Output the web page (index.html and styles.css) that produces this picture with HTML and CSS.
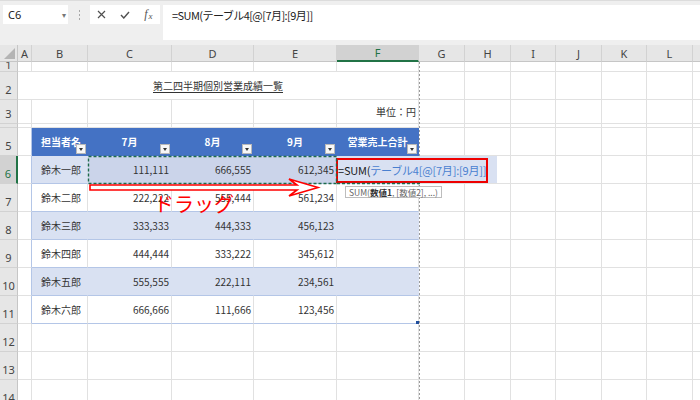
FILE: index.html
```html
<!DOCTYPE html>
<html lang="ja">
<head>
<meta charset="utf-8">
<title>Excel</title>
<link rel="stylesheet" href="styles.css">
</head>
<body>
<div class="app">
  <div class="topbar">
    <div class="namebox"><span>C6</span><span class="nb-arrow">▾</span></div>
    <div class="grip"><i></i><i></i><i></i></div>
    <div class="fxbox">
      <span class="fxbtn"><svg width="9" height="9" viewBox="0 0 9 9"><path d="M1 1L8 8M8 1L1 8" stroke="#505050" stroke-width="1.2" fill="none"/></svg></span>
      <span class="fxbtn"><svg width="10" height="8" viewBox="0 0 10 8"><path d="M1 4L3.8 7L9 1" stroke="#505050" stroke-width="1.4" fill="none"/></svg></span>
      <span class="fxbtn fx"><i>f</i><i class="fx-x">x</i></span>
    </div>
    <div class="formula">=SUM(テーブル4[@[7月]:[9月]]</div>
  </div>

  <div class="sheet">
    <!-- column headers -->
    <div class="corner"><i class="tri"></i></div>
    <div class="ch">A</div><div class="ch">B</div><div class="ch">C</div><div class="ch">D</div><div class="ch">E</div><div class="ch sel">F</div><div class="ch">G</div><div class="ch">H</div><div class="ch">I</div><div class="ch">J</div><div class="ch">K</div><div class="ch">L</div><div class="ch"></div>

    <!-- row 1 -->
    <div class="rh r1">1</div>
    <div class="c"></div><div class="c"></div><div class="c"></div><div class="c"></div><div class="c"></div><div class="c"></div><div class="c"></div><div class="c"></div><div class="c"></div><div class="c"></div><div class="c"></div><div class="c"></div><div class="c"></div>

    <!-- row 2 -->
    <div class="rh">2</div>
    <div class="c title"><span>第二四半期個別営業成績一覧</span></div>
    <div class="c"></div><div class="c"></div><div class="c"></div><div class="c"></div><div class="c"></div><div class="c"></div><div class="c"></div>

    <!-- row 3 -->
    <div class="rh">3</div>
    <div class="c"></div><div class="c"></div><div class="c"></div><div class="c"></div><div class="c"></div>
    <div class="c n">単位：円</div>
    <div class="c"></div><div class="c"></div><div class="c"></div><div class="c"></div><div class="c"></div><div class="c"></div><div class="c"></div>

    <!-- row 4 -->
    <div class="rh"></div>
    <div class="c"></div><div class="c"></div><div class="c"></div><div class="c"></div><div class="c"></div><div class="c"></div><div class="c"></div><div class="c"></div><div class="c"></div><div class="c"></div><div class="c"></div><div class="c"></div><div class="c"></div>

    <!-- row 5 : table header -->
    <div class="rh">5</div>
    <div class="c ta"></div>
    <div class="th l">担当者名<span class="fb"><i></i></span></div>
    <div class="th">7月<span class="fb"><i></i></span></div>
    <div class="th">8月<span class="fb"><i></i></span></div>
    <div class="th">9月<span class="fb"><i></i></span></div>
    <div class="th">営業売上合計<span class="fb"><i></i></span></div>
    <div class="c"></div><div class="c"></div><div class="c"></div><div class="c"></div><div class="c"></div><div class="c"></div><div class="c"></div>

    <!-- row 6 -->
    <div class="rh sel">6</div>
    <div class="c ta"></div>
    <div class="bd nm">鈴木一郎</div>
    <div class="bd n sel">111,111</div>
    <div class="bd n sel">666,555</div>
    <div class="bd n sel">612,345</div>
    <div class="bd edit-cell">
      <div class="edit"><span class="k">=SUM(</span><span class="ref">テーブル4[@[7月]:[9月]]</span><span class="redbox"></span></div>
    </div>
    <div class="c"></div><div class="c"></div><div class="c"></div><div class="c"></div><div class="c"></div><div class="c"></div><div class="c"></div>

    <!-- row 7 -->
    <div class="rh">7</div>
    <div class="c ta"></div>
    <div class="wt nm">鈴木二郎</div>
    <div class="wt n">222,222</div>
    <div class="wt n">555,444</div>
    <div class="wt n">561,234</div>
    <div class="wt"></div>
    <div class="c"></div><div class="c"></div><div class="c"></div><div class="c"></div><div class="c"></div><div class="c"></div><div class="c"></div>

    <!-- row 8 -->
    <div class="rh">8</div>
    <div class="c ta"></div>
    <div class="bd nm">鈴木三郎</div>
    <div class="bd n">333,333</div>
    <div class="bd n">444,333</div>
    <div class="bd n">456,123</div>
    <div class="bd"></div>
    <div class="c"></div><div class="c"></div><div class="c"></div><div class="c"></div><div class="c"></div><div class="c"></div><div class="c"></div>

    <!-- row 9 -->
    <div class="rh">9</div>
    <div class="c ta"></div>
    <div class="wt nm">鈴木四郎</div>
    <div class="wt n">444,444</div>
    <div class="wt n">333,222</div>
    <div class="wt n">345,612</div>
    <div class="wt"></div>
    <div class="c"></div><div class="c"></div><div class="c"></div><div class="c"></div><div class="c"></div><div class="c"></div><div class="c"></div>

    <!-- row 10 -->
    <div class="rh">10</div>
    <div class="c ta"></div>
    <div class="bd nm">鈴木五郎</div>
    <div class="bd n">555,555</div>
    <div class="bd n">222,111</div>
    <div class="bd n">234,561</div>
    <div class="bd"></div>
    <div class="c"></div><div class="c"></div><div class="c"></div><div class="c"></div><div class="c"></div><div class="c"></div><div class="c"></div>

    <!-- row 11 -->
    <div class="rh">11</div>
    <div class="c ta"></div>
    <div class="wt nm">鈴木六郎</div>
    <div class="wt n">666,666</div>
    <div class="wt n">111,666</div>
    <div class="wt n">123,456</div>
    <div class="wt last"><span class="handle"></span></div>
    <div class="c"></div><div class="c"></div><div class="c"></div><div class="c"></div><div class="c"></div><div class="c"></div><div class="c"></div>

    <!-- row 12 -->
    <div class="rh">12</div>
    <div class="c"></div><div class="c"></div><div class="c"></div><div class="c"></div><div class="c"></div><div class="c"></div><div class="c"></div><div class="c"></div><div class="c"></div><div class="c"></div><div class="c"></div><div class="c"></div><div class="c"></div>

    <!-- row 13 -->
    <div class="rh">13</div>
    <div class="c"></div><div class="c"></div><div class="c"></div><div class="c"></div><div class="c"></div><div class="c"></div><div class="c"></div><div class="c"></div><div class="c"></div><div class="c"></div><div class="c"></div><div class="c"></div><div class="c"></div>

    <!-- row 14 -->
    <div class="rh">14</div>
    <div class="c"></div><div class="c"></div><div class="c"></div><div class="c"></div><div class="c"></div><div class="c"></div><div class="c"></div><div class="c"></div><div class="c"></div><div class="c"></div><div class="c"></div><div class="c"></div><div class="c"></div>
  </div>

  <!-- annotations over the sheet -->
  <svg class="annot" width="700" height="400" viewBox="0 0 700 400">
    <line x1="419.5" y1="62" x2="419.5" y2="157" stroke="#9a9a9a" stroke-width="1" stroke-dasharray="2 2"/>
    <line x1="419.5" y1="185" x2="419.5" y2="400" stroke="#9a9a9a" stroke-width="1" stroke-dasharray="2 2"/>
    <rect x="88.5" y="156.5" width="248" height="27" fill="none" stroke="#1e6b4a" stroke-width="1.4" stroke-dasharray="3 2"/>
    <line x1="337" y1="183.5" x2="420" y2="183.5" stroke="#1e6b4a" stroke-width="1.4" stroke-dasharray="3 2"/>
    <polygon points="90,185 297,185 289,179 318,187.5 289,196 297,190 90,190" fill="#fff" stroke="#f00" stroke-width="1.6"/>
  </svg>
  <div class="drag">ドラッグ</div>
  <div class="tip">SUM(<b>数値1</b>, [数値2], ...)</div>
</div>
</body>
</html>
```

FILE: styles.css
```css
* { box-sizing: border-box; }
html, body { margin: 0; padding: 0; }
body {
  width: 700px;
  height: 400px;
  overflow: hidden;
  background: #fff;
  font-family: "Noto Sans CJK JP", "Noto Sans", sans-serif;
}
.app {
  position: relative;
  width: 700px;
  height: 400px;
  overflow: hidden;
}

/* ---------- formula bar ---------- */
.topbar {
  height: 45px;
  background: #efefef;
  border-top: 1px solid #dcdcdc;
  display: flex;
  align-items: flex-start;
  padding: 4px 0 0 3px;
}
.namebox {
  width: 65px;
  height: 19px;
  background: #fff;
  display: flex;
  align-items: center;
  justify-content: space-between;
  padding: 0 2px 0 5px;
  font-family: "Noto Sans", sans-serif;
  font-size: 11px;
  color: #222;
}
.nb-arrow { font-size: 8px; color: #777; }
.grip {
  width: 22px;
  height: 19px;
  display: flex;
  flex-direction: column;
  align-items: center;
  justify-content: center;
  gap: 2px;
}
.grip i { display: block; width: 1px; height: 2px; background: #a8a8a8; }
.fxbox {
  width: 70px;
  height: 19px;
  background: #fff;
  display: flex;
  align-items: center;
}
.fxbtn {
  flex: 1;
  display: flex;
  align-items: center;
  justify-content: center;
}
.fx {
  font-family: "Liberation Serif", serif;
  font-style: italic;
  font-size: 12px;
  color: #555;
}
.fx i { font-style: italic; }
.fx-x { font-size: 9px; margin-left: 1px; position: relative; top: 1px; }
.formula {
  flex: 1;
  margin-left: 3px;
  height: 35px;
  background: #fff;
  padding-left: 9px;
  font-size: 11px;
  line-height: 20px;
  letter-spacing: -0.55px;
  color: #222;
  white-space: nowrap;
}

/* ---------- sheet grid ---------- */
.sheet {
  display: grid;
  grid-template-columns: 18px 14px 56px 84px 82px 83px 82px 46px 46px 45px 46px 45px 46px 60px;
  grid-template-rows: 17px 10px 28px 24px 4px repeat(10, 28px);
}
.sheet > div {
  display: flex;
  align-items: center;
  white-space: nowrap;
  font-size: 10px;
  color: #333;
}
.corner {
  background: #e6e6e6;
  border-right: 1px solid #c6c6c6;
  border-bottom: 1px solid #c6c6c6;
  justify-content: flex-end;
  align-items: flex-end !important;
  padding: 0 2px 2px 0;
}
.tri {
  display: block;
  width: 0;
  height: 0;
  border-left: 11px solid transparent;
  border-bottom: 11px solid #b4b4b4;
}
.ch {
  background: #e6e6e6;
  border-right: 1px solid #d2d2d2;
  border-bottom: 1px solid #c6c6c6;
  justify-content: center;
  font-family: "Noto Sans", sans-serif;
  font-size: 11px !important;
  color: #444 !important;
}
.ch.sel {
  background: #d2d2d2;
  color: #217346 !important;
  border-bottom: 2px solid #217346;
}
.rh {
  background: #e6e6e6;
  border-right: 1px solid #c6c6c6;
  border-bottom: 1px solid #d2d2d2;
  justify-content: center;
  align-items: flex-end !important;
  padding-bottom: 3px;
  line-height: 12px;
  overflow: hidden;
  font-family: "Noto Sans", sans-serif;
  font-size: 11px !important;
  color: #444 !important;
}
.rh.r1 { padding-bottom: 0; }
.rh.sel {
  background: #d2d2d2;
  color: #217346 !important;
  border-right: 2px solid #217346;
}
.c {
  border-right: 1px solid #e1e1e1;
  border-bottom: 1px solid #e1e1e1;
}
.c.ta { border-right-color: #b4c6e7; }
.title {
  grid-column: span 6;
  justify-content: center;
}
.title span {
  text-decoration: underline;
  text-underline-offset: 2px;
}
.n { justify-content: flex-end; padding-right: 2px; }
.nm { padding-left: 9px; }

/* table */
.th {
  position: relative;
  background: #4472c4;
  border-right: 1px solid #4472c4;
  border-bottom: 1px solid #4472c4;
  justify-content: center;
  color: #fff !important;
  font-weight: bold;
}
.th.l { justify-content: flex-start; padding-left: 9px; }
.fb {
  position: absolute;
  right: 1px;
  bottom: 1px;
  width: 10px;
  height: 10px;
  background: #f7f7f7;
  border: 1px solid #b8b8b8;
  display: flex;
  align-items: center;
  justify-content: center;
}
.fb i {
  display: block;
  width: 0;
  height: 0;
  border-left: 2.5px solid transparent;
  border-right: 2.5px solid transparent;
  border-top: 3px solid #333;
  margin-top: 1px;
}
.bd {
  background: #d9e1f2;
  border-right: 1px solid #d9e1f2;
  border-bottom: 1px solid #b4c6e7;
}
.bd.sel {
  background: #cbd4ea;
  border-right-color: #cbd4ea;
}
.wt {
  background: #fff;
  border-right: 1px solid #e1e1e1;
  border-bottom: 1px solid #b4c6e7;
}
.edit-cell { position: relative; }
.edit {
  position: absolute;
  left: 0;
  top: 0;
  width: 160px;
  height: 27px;
  z-index: 2;
  background: #d9e1f2;
  padding-left: 1px;
  font-size: 11px;
  line-height: 28px;
  letter-spacing: -0.2px;
  white-space: nowrap;
}
.edit .k { color: #1a1a1a; }
.edit .ref { color: #4a80d0; }
.redbox {
  position: absolute;
  left: -1px;
  top: 2px;
  width: 152px;
  height: 25px;
  border: 2px solid #ee0000;
}
.last { position: relative; }
.handle {
  position: absolute;
  right: -1px;
  bottom: -1px;
  width: 3px;
  height: 3px;
  background: #1f4e9c;
}

/* ---------- annotations ---------- */
.annot {
  position: absolute;
  left: 0;
  top: 0;
  z-index: 5;
  pointer-events: none;
}
.drag {
  position: absolute;
  left: 154px;
  top: 192px;
  z-index: 6;
  font-size: 20px;
  line-height: 24px;
  color: #f00;
  white-space: nowrap;
}
.tip {
  position: absolute;
  left: 345px;
  top: 186px;
  z-index: 6;
  height: 12px;
  background: #fff;
  border: 1px solid #bdbdbd;
  padding: 0 3px;
  font-size: 8.5px;
  line-height: 10px;
  color: #666;
  white-space: nowrap;
}
.tip b { color: #333; }
```
